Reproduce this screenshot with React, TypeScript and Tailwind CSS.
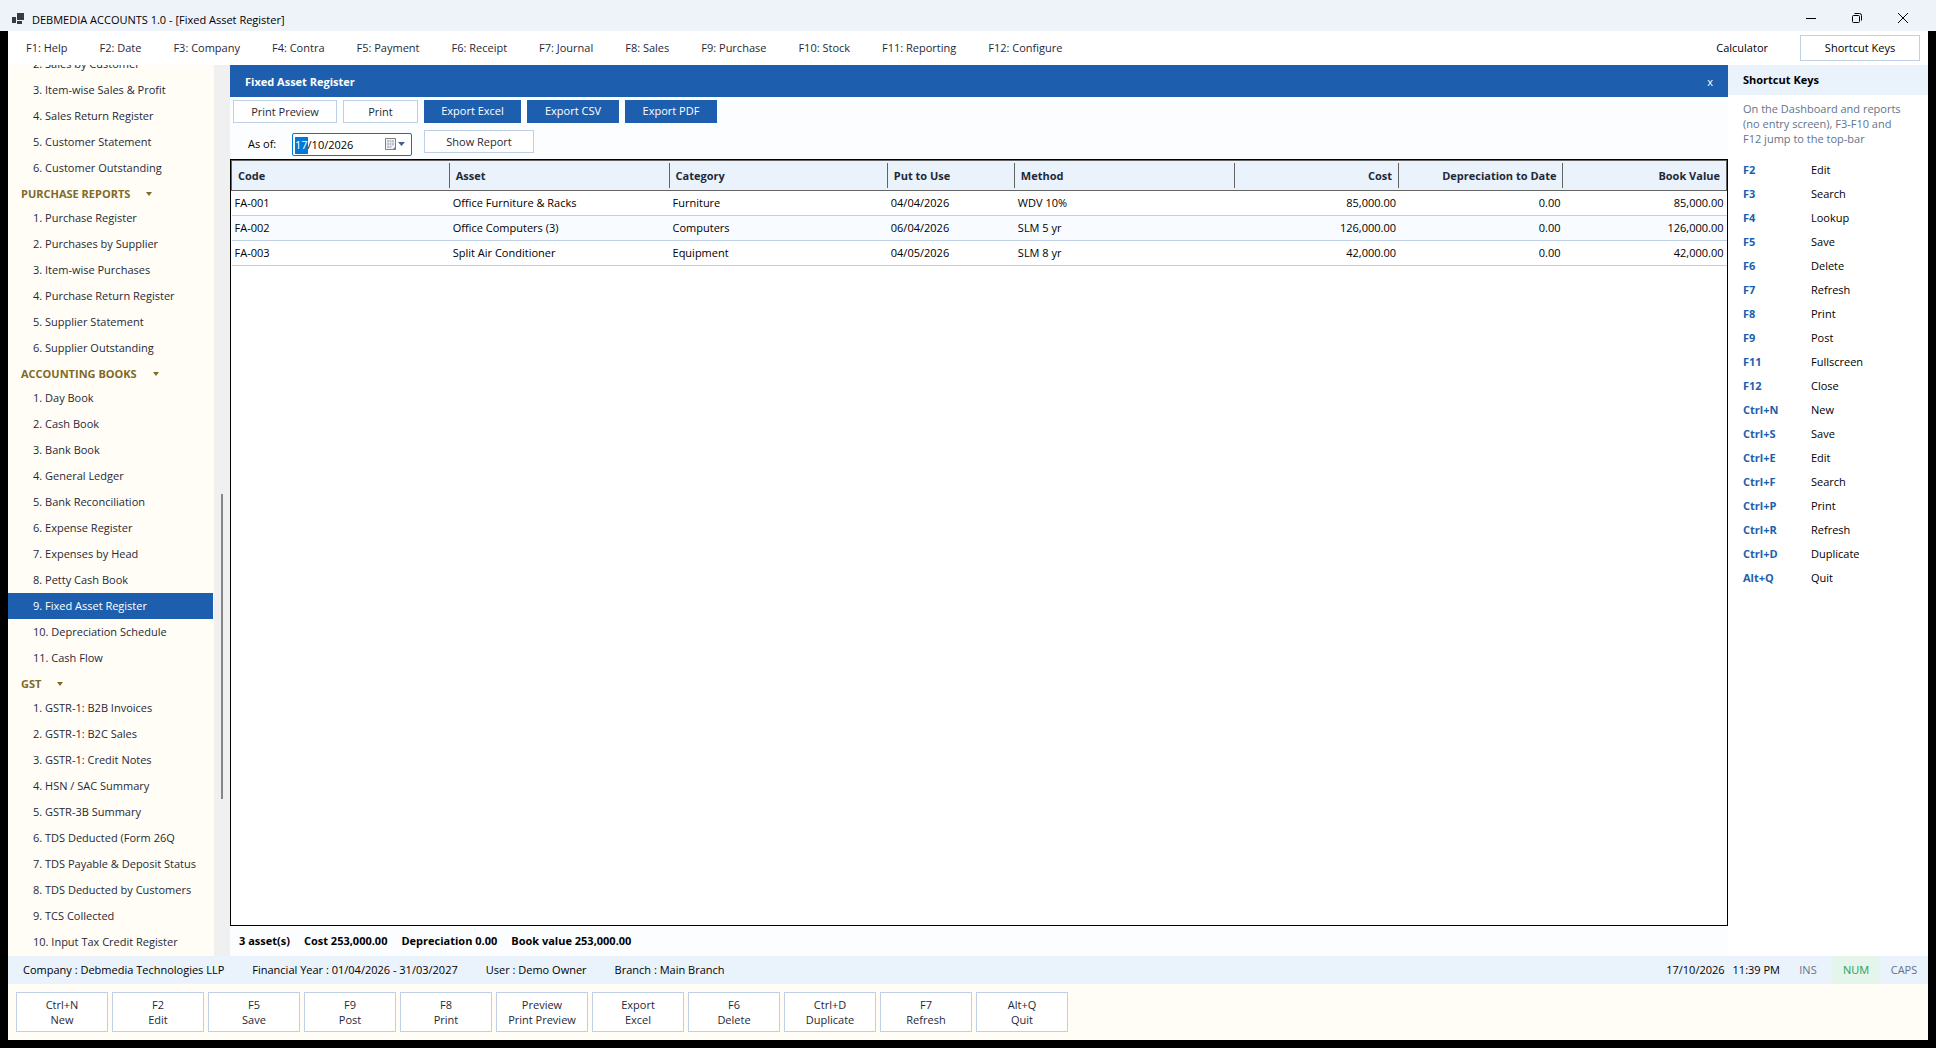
import React from "react";

const menuItems = [
  "F1: Help",
  "F2: Date",
  "F3: Company",
  "F4: Contra",
  "F5: Payment",
  "F6: Receipt",
  "F7: Journal",
  "F8: Sales",
  "F9: Purchase",
  "F10: Stock",
  "F11: Reporting",
  "F12: Configure",
];

const navGroups = [
  {
    title: "",
    items: [
      "2. Sales by Customer",
      "3. Item-wise Sales & Profit",
      "4. Sales Return Register",
      "5. Customer Statement",
      "6. Customer Outstanding",
    ],
  },
  {
    title: "PURCHASE REPORTS",
    items: [
      "1. Purchase Register",
      "2. Purchases by Supplier",
      "3. Item-wise Purchases",
      "4. Purchase Return Register",
      "5. Supplier Statement",
      "6. Supplier Outstanding",
    ],
  },
  {
    title: "ACCOUNTING BOOKS",
    items: [
      "1. Day Book",
      "2. Cash Book",
      "3. Bank Book",
      "4. General Ledger",
      "5. Bank Reconciliation",
      "6. Expense Register",
      "7. Expenses by Head",
      "8. Petty Cash Book",
      "9. Fixed Asset Register",
      "10. Depreciation Schedule",
      "11. Cash Flow",
    ],
  },
  {
    title: "GST",
    items: [
      "1. GSTR-1: B2B Invoices",
      "2. GSTR-1: B2C Sales",
      "3. GSTR-1: Credit Notes",
      "4. HSN / SAC Summary",
      "5. GSTR-3B Summary",
      "6. TDS Deducted (Form 26Q",
      "7. TDS Payable & Deposit Status",
      "8. TDS Deducted by Customers",
      "9. TCS Collected",
      "10. Input Tax Credit Register",
    ],
  },
];

const activeItem = "9. Fixed Asset Register";

const columns = [
  { label: "Code", width: "w-[14.6%]", right: false },
  { label: "Asset", width: "w-[14.7%]", right: false },
  { label: "Category", width: "w-[14.6%]", right: false },
  { label: "Put to Use", width: "w-[8.5%]", right: false },
  { label: "Method", width: "w-[14.7%]", right: false },
  { label: "Cost", width: "w-[11%]", right: true },
  { label: "Depreciation to Date", width: "w-[11%]", right: true },
  { label: "Book Value", width: "w-[10.9%]", right: true },
];

const assets = [
  ["FA-001", "Office Furniture & Racks", "Furniture", "04/04/2026", "WDV 10%", "85,000.00", "0.00", "85,000.00"],
  ["FA-002", "Office Computers (3)", "Computers", "06/04/2026", "SLM 5 yr", "126,000.00", "0.00", "126,000.00"],
  ["FA-003", "Split Air Conditioner", "Equipment", "04/05/2026", "SLM 8 yr", "42,000.00", "0.00", "42,000.00"],
];

const shortcuts = [
  ["F2", "Edit"],
  ["F3", "Search"],
  ["F4", "Lookup"],
  ["F5", "Save"],
  ["F6", "Delete"],
  ["F7", "Refresh"],
  ["F8", "Print"],
  ["F9", "Post"],
  ["F11", "Fullscreen"],
  ["F12", "Close"],
  ["Ctrl+N", "New"],
  ["Ctrl+S", "Save"],
  ["Ctrl+E", "Edit"],
  ["Ctrl+F", "Search"],
  ["Ctrl+P", "Print"],
  ["Ctrl+R", "Refresh"],
  ["Ctrl+D", "Duplicate"],
  ["Alt+Q", "Quit"],
];

const actions = [
  ["Ctrl+N", "New"],
  ["F2", "Edit"],
  ["F5", "Save"],
  ["F9", "Post"],
  ["F8", "Print"],
  ["Preview", "Print Preview"],
  ["Export", "Excel"],
  ["F6", "Delete"],
  ["Ctrl+D", "Duplicate"],
  ["F7", "Refresh"],
  ["Alt+Q", "Quit"],
];

function TitleBar() {
  return (
    <header className="flex h-[31px] shrink-0 items-end justify-between bg-[#eef3fa] pr-2.5 pl-3">
      <div className="flex h-6 items-center gap-2">
        <svg width="12" height="12" viewBox="0 0 12 12" fill="#3b3b3b" aria-hidden="true">
          <rect x="5" y="0" width="7" height="7" />
          <rect x="0" y="4" width="4" height="6" />
          <rect x="5" y="8" width="5" height="3" />
        </svg>
        <h1 className="pt-0.5 text-black">DEBMEDIA ACCOUNTS 1.0 - [Fixed Asset Register]</h1>
      </div>
      <div className="flex h-[26px]">
        <button aria-label="Minimize" className="flex w-[46px] items-center justify-center">
          <svg width="10" height="10" viewBox="0 0 10 10" stroke="#000" aria-hidden="true">
            <path d="M0 5.500h10" />
          </svg>
        </button>
        <button aria-label="Restore" className="flex w-[46px] items-center justify-center">
          <svg width="10" height="10" viewBox="0 0 10 10" fill="none" stroke="#000" aria-hidden="true">
            <rect x="0.5" y="2.5" width="7" height="7" rx="1" />
            <path d="M2.5 0.5h5a2 2 0 0 1 2 2v5" />
          </svg>
        </button>
        <button aria-label="Close window" className="flex w-[46px] items-center justify-center">
          <svg width="10" height="10" viewBox="0 0 10 10" stroke="#000" aria-hidden="true">
            <path d="M0 0l10 10M10 0L0 10" />
          </svg>
        </button>
      </div>
    </header>
  );
}

function MenuBar() {
  return (
    <nav className="flex h-[34px] shrink-0 items-center justify-between bg-white pr-2 pl-[18px] text-[#1f2937]">
      <div className="flex gap-8">
        {menuItems.map((item) => (
          <button key={item}>{item}</button>
        ))}
      </div>
      <div className="flex items-center gap-8 text-black">
        <button>Calculator</button>
        <button className="h-[26px] w-[120px] border border-[#c0d0e4]">Shortcut Keys</button>
      </div>
    </nav>
  );
}

function Sidebar() {
  return (
    <aside className="flex w-[222px] shrink-0 bg-[#f0f0f0]">
      <div className="flex w-[206px] flex-col justify-end overflow-hidden bg-[#fffdf5] pr-px pb-px">
        {navGroups.map((group) => (
          <div key={group.title} className="shrink-0">
            {group.title && (
              <button className="flex h-6 items-center gap-4 pt-0.5 pl-[13px] font-bold text-[#7f6a2a]">
                {group.title}
                <svg width="6" height="4" viewBox="0 0 6 4" fill="currentColor" aria-hidden="true">
                  <path d="M0 0h6L3 4z" />
                </svg>
              </button>
            )}
            {group.items.map((item) => (
              <a
                key={item}
                href="#"
                className={
                  item === activeItem
                    ? "block h-[26px] bg-[#1d5fae] pl-[25px] leading-[26px] whitespace-nowrap text-white"
                    : "block h-[26px] pl-[25px] leading-[26px] whitespace-nowrap text-[#1f2937]"
                }
              >
                {item}
              </a>
            ))}
          </div>
        ))}
      </div>
      {/* Scroll track, thumb sits below the middle */}
      <div className="flex w-4 flex-col items-center">
        <div className="flex-[429]" />
        <div className="w-0.5 flex-[305] bg-[#858585]" />
        <div className="flex-[157]" />
      </div>
    </aside>
  );
}

function Toolbar() {
  return (
    <div className="flex h-[62px] shrink-0 flex-col gap-[7px] bg-[#fcfdff] pt-[3px] text-[#1f2937]">
      <div className="flex h-[23px] gap-1.5 pl-[3px]">
        <button className="w-[104px] border border-[#c0d0e4] bg-white pt-0.5">Print Preview</button>
        <button className="w-[75px] border border-[#c0d0e4] bg-white pt-0.5">Print</button>
        <button className="w-[97px] bg-[#1d5fae] text-white">Export Excel</button>
        <button className="w-[92px] bg-[#1d5fae] text-white">Export CSV</button>
        <button className="w-[92px] bg-[#1d5fae] text-white">Export PDF</button>
      </div>
      <div className="flex items-start pl-[18px]">
        <label htmlFor="as-of" className="w-11 pt-1.5 text-black">
          As of:
        </label>
        <div className="relative mt-[3px] mr-3 w-[120px]">
          <input
            id="as-of"
            defaultValue="17/10/2026"
            className="h-[23px] w-full rounded-xs border border-[#0078d7] bg-white px-0.5 text-black outline-none"
          />
          {/* Day part is the selected segment of the picker */}
          <span className="absolute top-1 left-[3px] bg-[#0078d7] text-white" aria-hidden="true">
            17
          </span>
          <svg className="absolute top-1 right-1.5" width="21" height="15" viewBox="0 0 21 15" aria-hidden="true">
            <path d="M0.500 1.500h10v11h-10z" fill="#f7f7f7" stroke="#857b7b" />
            <path d="M11 9v4h-4z" fill="#857b7b" />
            <path d="M2 3h7v6h-2v2h-5z" fill="#b9c1d0" />
            <path d="M2 5.500h7M2 8.500h7M4.500 3v8M6.500 3v8" stroke="#f7f7f7" strokeWidth="0.5" />
            <path d="M13 5h7l-3.500 4z" fill="#44608a" />
          </svg>
        </div>
        <button className="h-[23px] w-[110px] border border-[#c0d0e4] bg-white pt-0.5">Show Report</button>
      </div>
    </div>
  );
}

function AssetTable() {
  return (
    <div className="flex-1 border border-black bg-white text-black">
      <table className="w-full table-fixed border-collapse">
        <thead>
          <tr className="h-[30px] border border-[#646464] bg-[#eaf2fc] text-[#1f2937]">
            {columns.map((col, i) => (
              <th
                key={col.label}
                className={
                  col.width + " py-[2px] font-bold " + (col.right ? "text-right" : "text-left")
                }
              >
                <div
                  className={
                    i < columns.length - 1
                      ? "h-[25px] border-r border-[#646464] px-1.5 leading-[25px]"
                      : "h-[25px] px-1.5 leading-[25px]"
                  }
                >
                  {col.label}
                </div>
              </th>
            ))}
          </tr>
        </thead>
        <tbody>
          {assets.map((row) => (
            <tr key={row[0]} className="h-[25px] border-b border-[#c0d0e4] even:bg-[#f8fbff]">
              {row.map((cell, i) => (
                <td key={i} className={columns[i].right ? "px-[3px] text-right" : "px-[3px]"}>
                  {cell}
                </td>
              ))}
            </tr>
          ))}
        </tbody>
      </table>
    </div>
  );
}

function ShortcutPanel() {
  return (
    <aside className="w-[200px] shrink-0 bg-white text-black">
      <h2 className="h-[30px] bg-[#eaf2fc] pl-[15px] leading-[30px] font-bold">Shortcut Keys</h2>
      <p className="mt-1.5 pl-[15px] leading-[15px] whitespace-nowrap text-[#64748b]">
        On the Dashboard and reports
        <br />
        (no entry screen), F3-F10 and
        <br />
        F12 jump to the top-bar
      </p>
      <dl className="mt-3 pl-[15px]">
        {shortcuts.map(([key, label]) => (
          <div key={key} className="flex h-6 items-center">
            <dt className="w-[68px] font-bold text-[#1d5fae]">{key}</dt>
            <dd>{label}</dd>
          </div>
        ))}
      </dl>
    </aside>
  );
}

function StatusBar() {
  return (
    <div className="flex h-7 shrink-0 items-center justify-between bg-[#eaf2fc] pl-[15px] text-black">
      <div className="flex gap-7">
        <span>Company : Debmedia Technologies LLP</span>
        <span>Financial Year : 01/04/2026 - 31/03/2027</span>
        <span>User : Demo Owner</span>
        <span>Branch : Main Branch</span>
      </div>
      <div className="flex h-full items-center text-center leading-7">
        <span className="mr-1 flex gap-2">
          <span>17/10/2026</span>
          <span>11:39 PM</span>
        </span>
        <span className="w-12 text-[#64748b]">INS</span>
        <span className="w-12 bg-[#e4f5ec] text-[#22a05a]">NUM</span>
        <span className="w-12 text-[#64748b]">CAPS</span>
      </div>
    </div>
  );
}

function ActionBar() {
  return (
    <div className="flex h-14 shrink-0 gap-1 bg-[#fffdf5] p-2 text-[#1f2937]">
      {actions.map(([key, label]) => (
        <button key={key} className="h-10 w-[92px] border border-[#c0d0e4] bg-white leading-[15px]">
          {key}
          <br />
          {label}
        </button>
      ))}
    </div>
  );
}

export default function App() {
  return (
    <div className="flex h-screen flex-col bg-black font-['Open_Sans',sans-serif] text-[11px]">
      <TitleBar />
      <div className="mx-2 mb-2 flex min-h-0 flex-1 flex-col">
        <MenuBar />
        <div className="flex min-h-0 flex-1">
          <Sidebar />
          <main className="flex min-w-0 flex-1 flex-col bg-[#fcfdff]">
            <div className="flex h-8 shrink-0 items-center justify-between bg-[#1d5fae] px-[15px] pt-0.5 text-white">
              <h2 className="font-bold">Fixed Asset Register</h2>
              <button aria-label="Close report">x</button>
            </div>
            <Toolbar />
            <AssetTable />
            <div className="flex h-[30px] shrink-0 items-center gap-3.5 pl-[9px] font-bold text-black">
              <span>3 asset(s)</span>
              <span>Cost 253,000.00</span>
              <span>Depreciation 0.00</span>
              <span>Book value 253,000.00</span>
            </div>
          </main>
          <ShortcutPanel />
        </div>
        <StatusBar />
        <ActionBar />
      </div>
    </div>
  );
}
